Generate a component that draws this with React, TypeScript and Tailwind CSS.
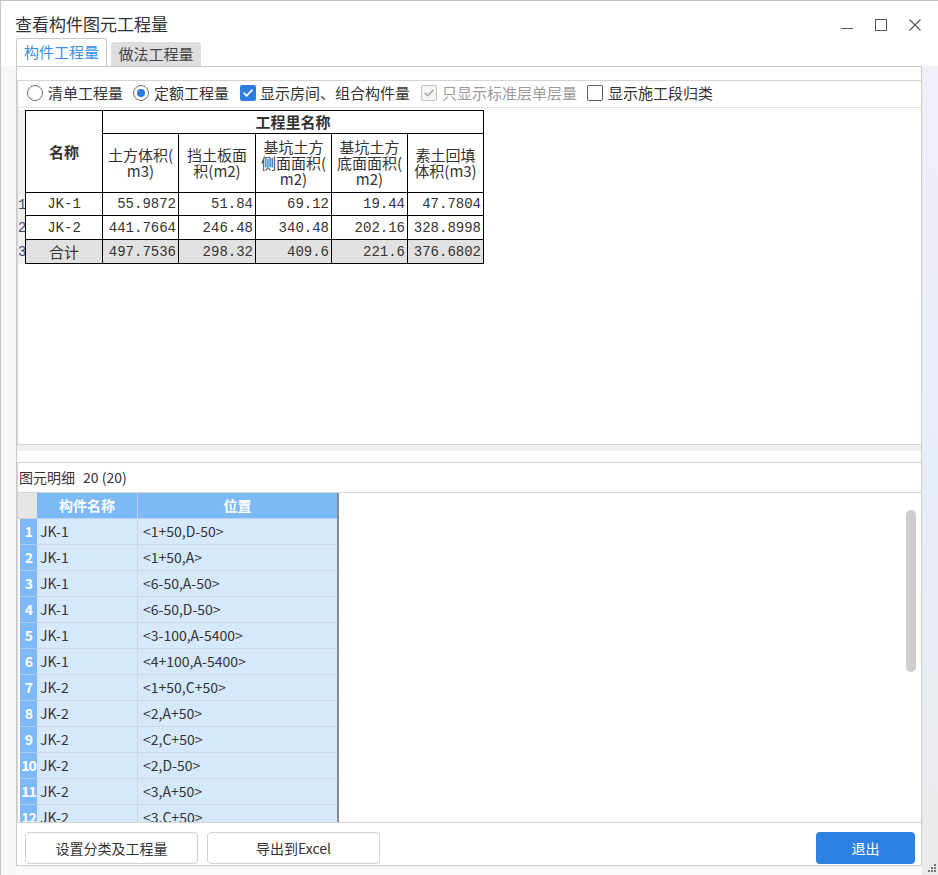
import React from 'react'

const upperRows = [
  { name: 'JK-1', v: ['55.9872', '51.84', '69.12', '19.44', '47.7804'] },
  { name: 'JK-2', v: ['441.7664', '246.48', '340.48', '202.16', '328.8998'] },
]
const totalRow = { name: '合计', v: ['497.7536', '298.32', '409.6', '221.6', '376.6802'] }

const details: [string, string][] = [
  ['JK-1', '<1+50,D-50>'],
  ['JK-1', '<1+50,A>'],
  ['JK-1', '<6-50,A-50>'],
  ['JK-1', '<6-50,D-50>'],
  ['JK-1', '<3-100,A-5400>'],
  ['JK-1', '<4+100,A-5400>'],
  ['JK-2', '<1+50,C+50>'],
  ['JK-2', '<2,A+50>'],
  ['JK-2', '<2,C+50>'],
  ['JK-2', '<2,D-50>'],
  ['JK-2', '<3,A+50>'],
  ['JK-2', '<3,C+50>'],
]

function Radio({ checked }: { checked?: boolean }) {
  return (
    <span className="w-[16px] h-[16px] rounded-full border border-[#6e6e6e] bg-white flex items-center justify-center shrink-0">
      {checked && <span className="w-[8px] h-[8px] rounded-full bg-[#2a7ae0]" />}
    </span>
  )
}

function Check({ state }: { state: 'on' | 'off' | 'disabled' }) {
  if (state === 'on') {
    return (
      <span className="w-[16px] h-[16px] rounded-[2px] bg-[#2b7de0] flex items-center justify-center shrink-0">
        <svg width="12" height="12" viewBox="0 0 12 12" fill="none">
          <path d="M2 6.2l2.6 2.6L10 3.2" stroke="white" strokeWidth="1.7" strokeLinecap="round" strokeLinejoin="round" />
        </svg>
      </span>
    )
  }
  if (state === 'disabled') {
    return (
      <span className="w-[16px] h-[16px] rounded-[2px] border border-[#c4c4c4] bg-[#f4f4f4] flex items-center justify-center shrink-0">
        <svg width="12" height="12" viewBox="0 0 12 12" fill="none">
          <path d="M2 6.2l2.6 2.6L10 3.2" stroke="#a8a8a8" strokeWidth="1.5" strokeLinecap="round" strokeLinejoin="round" />
        </svg>
      </span>
    )
  }
  return <span className="w-[16px] h-[16px] rounded-[2px] border border-[#5c5c5c] bg-white shrink-0" />
}

export default function App() {
  return (
    <div className="w-[938px] h-[875px] bg-[#fafafa] border-l border-t border-[#c4c4c4] flex flex-col font-['Noto_Sans_CJK_SC',sans-serif] text-[#333] overflow-hidden">
      {/* Title bar */}
      <div className="h-[37px] shrink-0 bg-white flex items-end pb-[2px] pl-[14px] pr-[16px]">
        <span className="text-[17px] leading-[24px] text-[#333]">查看构件图元工程量</span>
        <div className="ml-auto flex items-center gap-[20px] mb-[4px]">
          <svg width="14" height="14" viewBox="0 0 14 14"><path d="M1 10.5h12" stroke="#555" strokeWidth="1" /></svg>
          <svg width="14" height="14" viewBox="0 0 14 14"><rect x="1.5" y="1.5" width="11" height="11" fill="none" stroke="#555" strokeWidth="1" /></svg>
          <svg width="14" height="14" viewBox="0 0 14 14"><path d="M1.5 1.5l11 11M12.5 1.5l-11 11" stroke="#555" strokeWidth="1.1" /></svg>
        </div>
      </div>

      {/* Tabs */}
      <div className="h-[28px] shrink-0 bg-white flex items-end pl-[15px] gap-[4px]">
        <div className="h-[28px] w-[91px] border border-b-0 border-[#c9c9c9] rounded-t-[3px] bg-white flex items-center justify-center text-[15px] text-[#3a8ee6]">
          构件工程量
        </div>
        <div className="h-[24px] w-[90px] bg-[#dedede] rounded-t-[3px] flex items-center justify-center text-[15px] text-[#444]">
          做法工程量
        </div>
      </div>

      <div className="flex flex-1 min-h-0">
        <div className="w-[15px] shrink-0 bg-[#f6f6f6]" />
        {/* Tab panel */}
        <div className="w-[906px] h-[800px] border border-[#c9c9c9] bg-white flex flex-col shrink-0">
          {/* Upper group */}
          <div className="mt-[13px] h-[364px] border-t border-l border-[#d4d4d4] flex flex-col shrink-0">
            <div className="h-[24px] flex items-center pl-[9px] text-[15px] shrink-0">
              <div className="flex items-center gap-[5px]"><Radio /><span>清单工程量</span></div>
              <div className="flex items-center gap-[5px] ml-[10px]"><Radio checked /><span>定额工程量</span></div>
              <div className="flex items-center gap-[4px] ml-[11px]"><Check state="on" /><span>显示房间、组合构件量</span></div>
              <div className="flex items-center gap-[5px] ml-[11px]"><Check state="disabled" /><span className="text-[#9a9a9a]">只显示标准层单层量</span></div>
              <div className="flex items-center gap-[5px] ml-[10px]"><Check state="off" /><span>显示施工段归类</span></div>
            </div>
            <div className="flex border-t border-[#e2e2e2] mt-[2px] pt-[2px] flex-1">
              <div className="w-[8px] bg-[#efefef] flex flex-col shrink-0">
                <div className="h-[83px]" />
                {['1', '2', '3'].map((n, i) => (
                  <div key={n} className={`${i === 0 ? 'h-[23px]' : 'h-[24px]'} flex items-center font-['Liberation_Mono',monospace] text-[14px] text-[#3a4a78] leading-none`}>
                    {n}
                  </div>
                ))}
                <div className="flex-1 bg-white" />
              </div>
              <div className="-ml-[1px]">
                <table className="border-collapse text-[15px] leading-[16px]">
                  <colgroup>
                    <col className="w-[77px]" />
                    <col className="w-[76px]" />
                    <col className="w-[77px]" />
                    <col className="w-[76px]" />
                    <col className="w-[76px]" />
                    <col className="w-[76px]" />
                  </colgroup>
                  <tbody>
                    <tr className="h-[23px]">
                      <td rowSpan={2} className="border border-black text-center font-bold">名称</td>
                      <td colSpan={5} className="border border-black text-center font-bold">工程里名称</td>
                    </tr>
                    <tr className="h-[59px]">
                      <td className="border border-black text-center align-middle">土方体积(<br />m3)</td>
                      <td className="border border-black text-center align-middle">挡土板面<br />积(m2)</td>
                      <td className="border border-black text-center align-middle">基坑土方<br />侧面面积(<br />m2)</td>
                      <td className="border border-black text-center align-middle">基坑土方<br />底面面积(<br />m2)</td>
                      <td className="border border-black text-center align-middle">素土回填<br />体积(m3)</td>
                    </tr>
                    {upperRows.map((r, i) => (
                      <tr key={r.name} className={i === 0 ? 'h-[23px]' : 'h-[24px]'}>
                        <td className="border border-black text-center font-['Liberation_Mono',monospace] text-[14px]">{r.name}</td>
                        {r.v.map((v, j) => (
                          <td key={j} className="border border-black text-right pr-[2px] font-['Liberation_Mono',monospace] text-[14px]">{v}</td>
                        ))}
                      </tr>
                    ))}
                    <tr className="h-[24px] bg-[#e1e1e1]">
                      <td className="border border-black text-center">{totalRow.name}</td>
                      {totalRow.v.map((v, j) => (
                        <td key={j} className="border border-black text-right pr-[2px] font-['Liberation_Mono',monospace] text-[14px]">{v}</td>
                      ))}
                    </tr>
                  </tbody>
                </table>
              </div>
            </div>
          </div>

          {/* Splitter */}
          <div className="h-[18px] shrink-0 border-t border-[#d4d4d4] flex flex-col">
            <div className="h-[6px] bg-[#f0f0f0]" />
          </div>

          {/* Lower group */}
          <div className="h-[361px] shrink-0 border-t border-l border-b border-[#d4d4d4] flex flex-col">
            <div className="h-[29px] shrink-0 flex items-center gap-[8px] pl-[1px] text-[14px] text-[#333]">
              <span>图元明细</span>
              <span>20 (20)</span>
            </div>
            <div className="relative flex-1 min-h-0 border-t border-[#d4d4d4] overflow-hidden">
              <div className="w-[321px] border-r-2 border-[#8c8c8c] text-[14px]">
                <div className="flex h-[26px]">
                  <div className="w-[19px] bg-[#e6e6e6] border-b border-[#d0d0d0]" />
                  <div className="w-[101px] bg-[#7db9f6] text-white font-bold flex items-center justify-center border-r border-b border-[#b8d5f2]">构件名称</div>
                  <div className="flex-1 bg-[#7db9f6] text-white font-bold flex items-center justify-center border-b border-[#b8d5f2]">位置</div>
                </div>
                {details.map(([name, pos], i) => (
                  <div key={i} className="flex h-[26px]">
                    <div className="w-[2px] bg-white" />
                    <div className="w-[17px] bg-[#7db9f6] text-white font-bold flex items-center justify-center text-[14px] tracking-[-1px] border-b border-[#a9cdf2]">{i + 1}</div>
                    <div className="w-[101px] bg-[#d6e9fc] flex items-center pl-[3px] border-r border-b border-[#c9d7e4]">{name}</div>
                    <div className="flex-1 bg-[#d6e9fc] flex items-center pl-[5px] border-b border-[#c9d7e4]">{pos}</div>
                  </div>
                ))}
              </div>
              {/* scrollbar */}
              <div className="absolute right-[5px] top-[17px] w-[10px] h-[162px] rounded-full bg-[#cdcdcd]" />
            </div>
          </div>

          {/* Buttons */}
          <div className="flex-1 flex items-start pt-[9px] pl-[8px] pr-[6px] gap-[9px] text-[14px]">
            <button className="w-[173px] h-[32px] border border-[#cfcfcf] rounded-[4px] bg-white text-[#333]">设置分类及工程量</button>
            <button className="w-[173px] h-[32px] border border-[#cfcfcf] rounded-[4px] bg-white text-[#333]">导出到Excel</button>
            <button className="ml-auto w-[99px] h-[32px] rounded-[4px] bg-[#2d80e1] text-white">退出</button>
          </div>
        </div>
        {/* right strip */}
        <div className="flex-1 flex flex-col bg-gradient-to-b from-[#f2eef8] via-[#e7edf8] to-[#eaeaea]">
          <div className="mt-auto mb-[3px] ml-[6px]">
            <svg width="8" height="8" viewBox="0 0 8 8" fill="#777">
              <rect x="6" y="0" width="2" height="2" />
              <rect x="3" y="3" width="2" height="2" />
              <rect x="6" y="3" width="2" height="2" />
              <rect x="0" y="6" width="2" height="2" />
              <rect x="3" y="6" width="2" height="2" />
              <rect x="6" y="6" width="2" height="2" />
            </svg>
          </div>
        </div>
      </div>
    </div>
  )
}
